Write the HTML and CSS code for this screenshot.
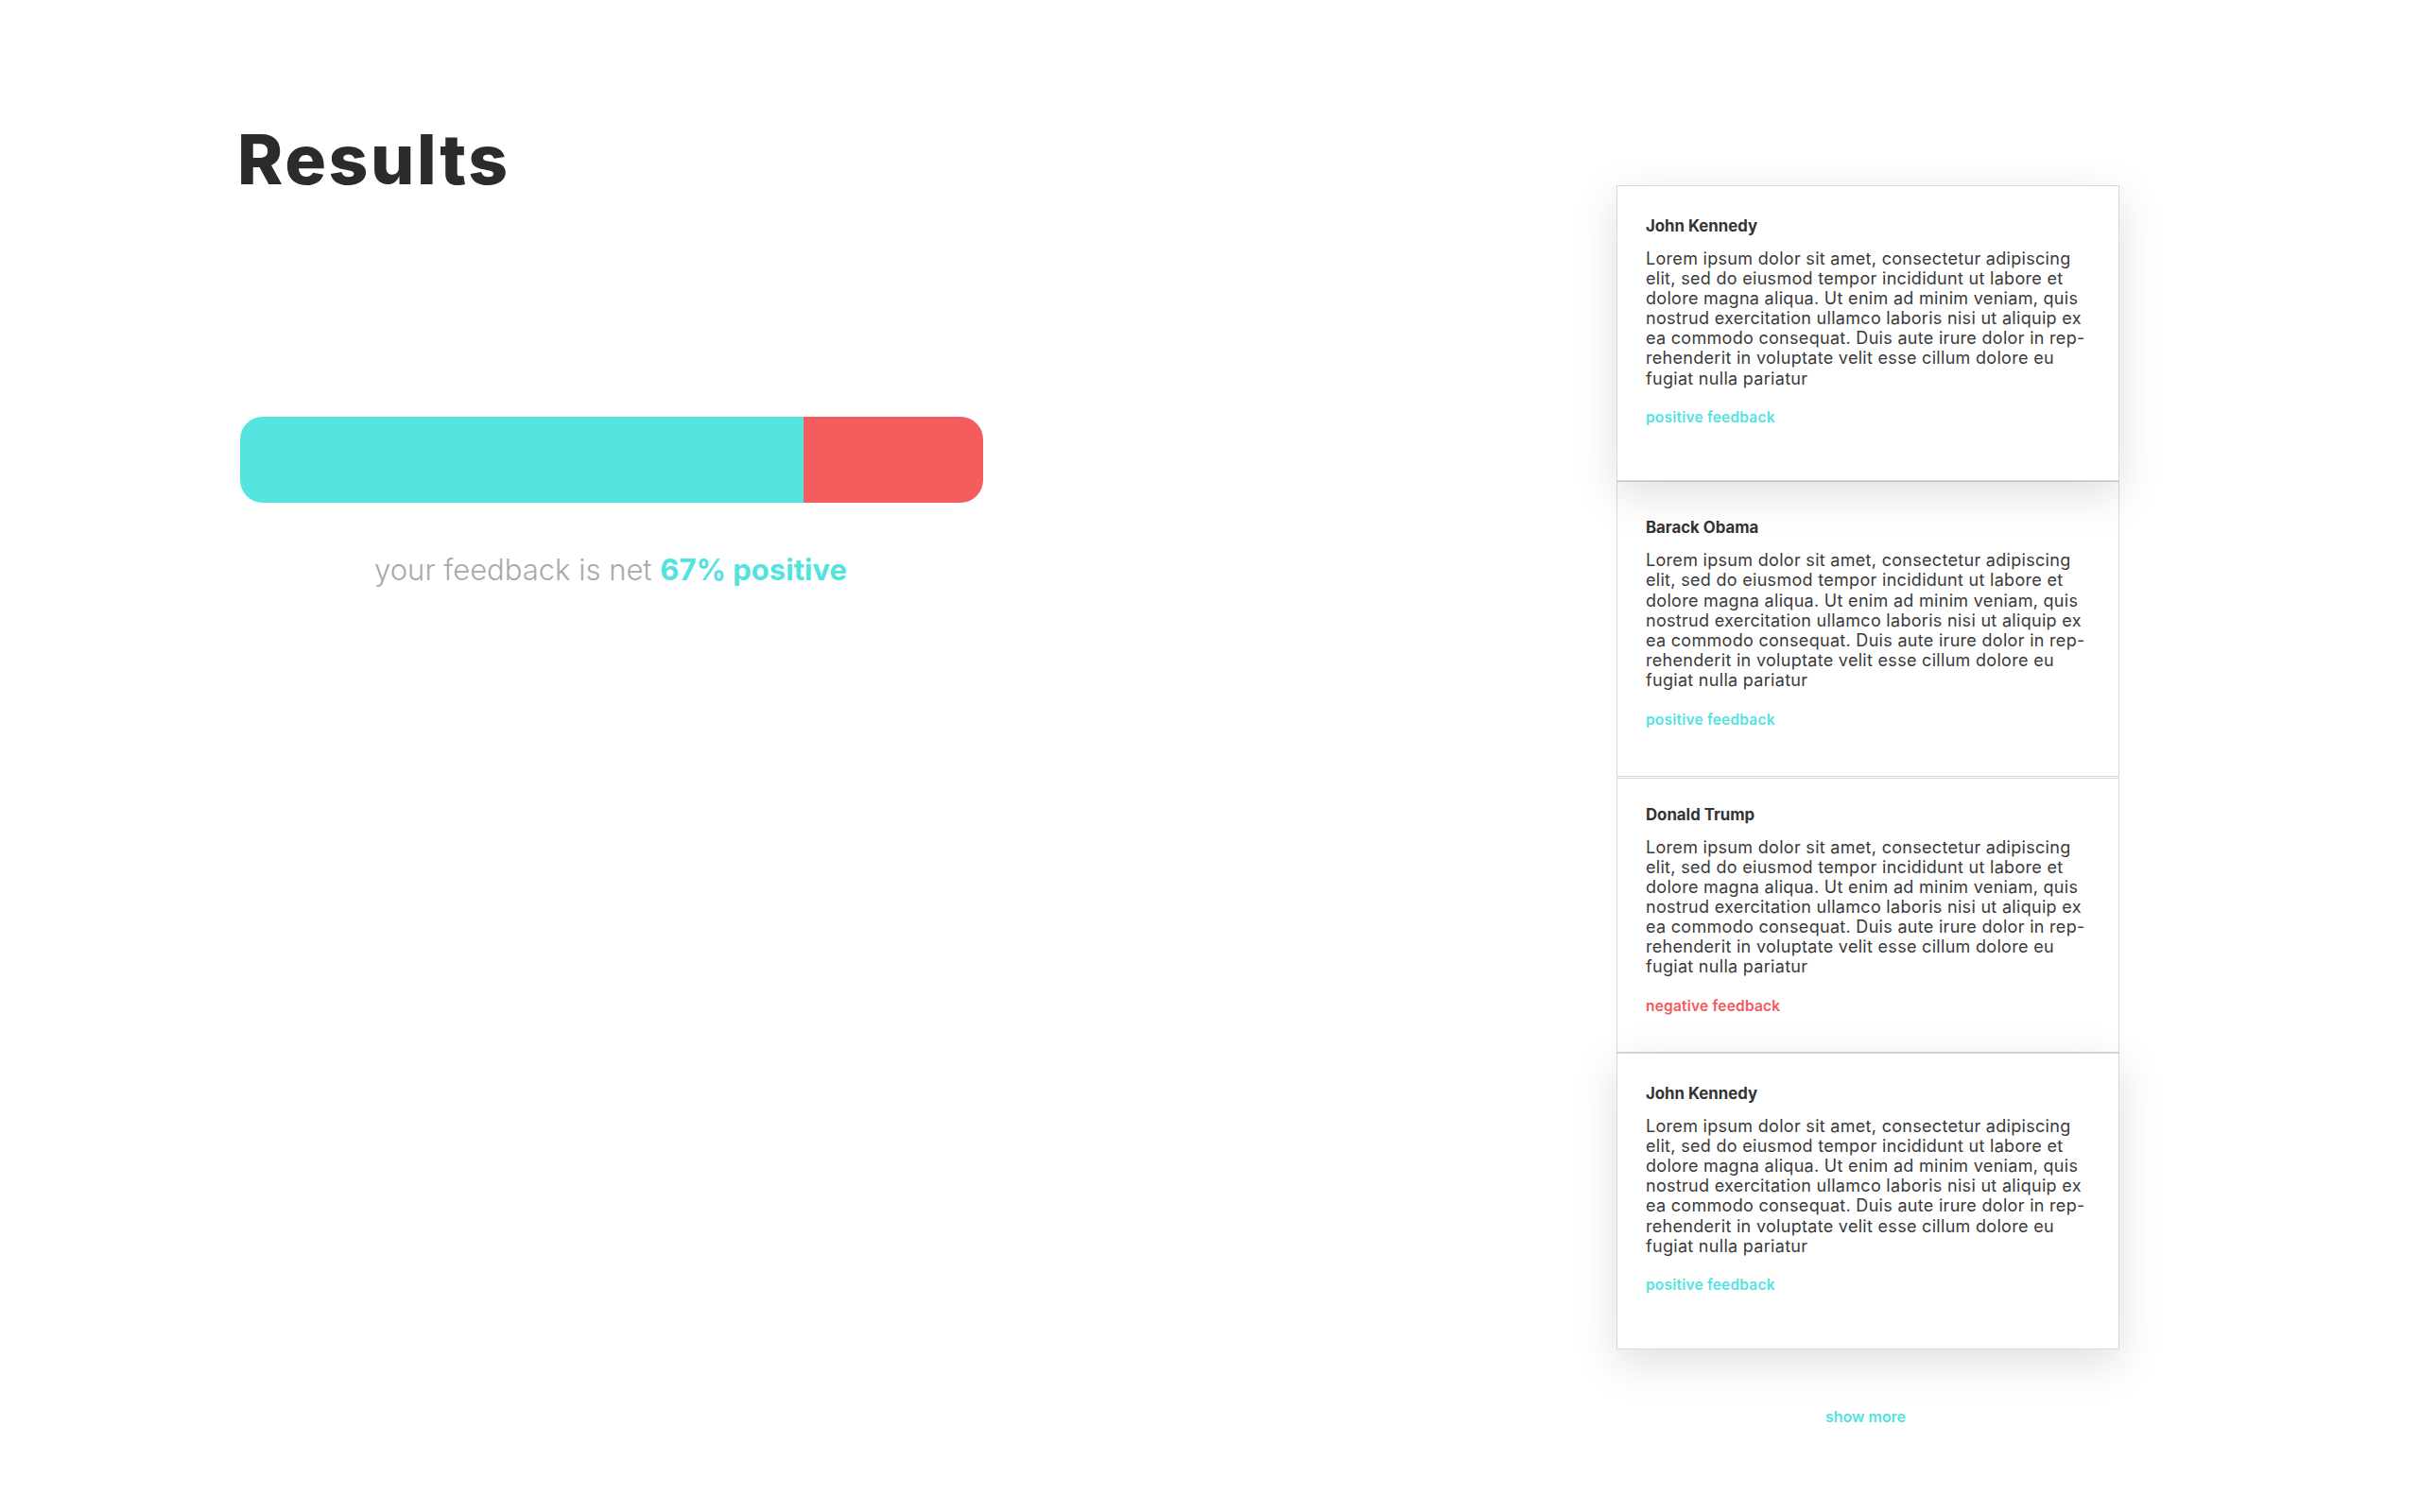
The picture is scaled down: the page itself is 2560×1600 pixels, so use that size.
FILE: index.html
```html
<!DOCTYPE html>
<html lang="en">
<head>
<meta charset="utf-8">
<title>Results</title>
<link rel="stylesheet" href="styles.css">
</head>
<body>
<main class="page">
  <section class="summary">
    <h1 class="title">Results</h1>
    <div class="bar">
      <div class="bar-pos" style="width: 75.8%"></div>
      <div class="bar-neg"></div>
    </div>
    <p class="net">your feedback is net <strong>67% positive</strong></p>
  </section>

  <aside class="feed">
    <article class="card card--raised card--first">
      <h2 class="card-name">John Kennedy</h2>
      <p class="card-text">Lorem ipsum dolor sit amet, consectetur adipiscing<br>elit, sed do eiusmod tempor incididunt ut labore et<br>dolore magna aliqua. Ut enim ad minim veniam, quis<br>nostrud exercitation ullamco laboris nisi ut aliquip ex<br>ea commodo consequat. Duis aute irure dolor in rep-<br>rehenderit in voluptate velit esse cillum dolore eu<br>fugiat nulla pariatur</p>
      <p class="card-tag card-tag--pos">positive feedback</p>
    </article>
    <article class="card card--second">
      <h2 class="card-name">Barack Obama</h2>
      <p class="card-text">Lorem ipsum dolor sit amet, consectetur adipiscing<br>elit, sed do eiusmod tempor incididunt ut labore et<br>dolore magna aliqua. Ut enim ad minim veniam, quis<br>nostrud exercitation ullamco laboris nisi ut aliquip ex<br>ea commodo consequat. Duis aute irure dolor in rep-<br>rehenderit in voluptate velit esse cillum dolore eu<br>fugiat nulla pariatur</p>
      <p class="card-tag card-tag--pos">positive feedback</p>
    </article>
    <article class="card card--third">
      <h2 class="card-name">Donald Trump</h2>
      <p class="card-text">Lorem ipsum dolor sit amet, consectetur adipiscing<br>elit, sed do eiusmod tempor incididunt ut labore et<br>dolore magna aliqua. Ut enim ad minim veniam, quis<br>nostrud exercitation ullamco laboris nisi ut aliquip ex<br>ea commodo consequat. Duis aute irure dolor in rep-<br>rehenderit in voluptate velit esse cillum dolore eu<br>fugiat nulla pariatur</p>
      <p class="card-tag card-tag--neg">negative feedback</p>
    </article>
    <article class="card card--raised card--fourth">
      <h2 class="card-name">John Kennedy</h2>
      <p class="card-text">Lorem ipsum dolor sit amet, consectetur adipiscing<br>elit, sed do eiusmod tempor incididunt ut labore et<br>dolore magna aliqua. Ut enim ad minim veniam, quis<br>nostrud exercitation ullamco laboris nisi ut aliquip ex<br>ea commodo consequat. Duis aute irure dolor in rep-<br>rehenderit in voluptate velit esse cillum dolore eu<br>fugiat nulla pariatur</p>
      <p class="card-tag card-tag--pos">positive feedback</p>
    </article>
    <a class="more" href="#">show more</a>
  </aside>
</main>
</body>
</html>
```

FILE: styles.css
```css
html, body {
  margin: 0;
  padding: 0;
  background: #ffffff;
}

body {
  font-family: Inter, "Noto Sans", "Liberation Sans", sans-serif;
  color: #333333;
}

.page {
  display: flex;
  justify-content: space-between;
  align-items: flex-start;
  padding: 0 318px 0 251px;
  min-height: 1600px;
  box-sizing: border-box;
}

/* Left summary */
.summary {
  width: 789px;
  padding-top: 132px;
}

.title {
  margin: 0;
  font-size: 73px;
  line-height: 73px;
  font-weight: 800;
  color: #2a2c2c;
  letter-spacing: 2.6px;
}

.bar {
  margin: 236px 0 0 3px;
  height: 91px;
  display: flex;
  border-radius: 24px;
  overflow: hidden;
}

.bar-pos {
  background: #54e5e0;
}

.bar-neg {
  flex: 1;
  background: #f55c5d;
}

.net {
  margin: 54px 0 0 1px;
  text-align: center;
  font-size: 31px;
  line-height: 34px;
  font-weight: 300;
  color: #a9a9a9;
}

.net strong {
  font-weight: 700;
  color: #52e3df;
}

/* Right feed */
.feed {
  width: 532px;
  padding-top: 196px;
  display: flex;
  flex-direction: column;
}

.card {
  position: relative;
  background: #ffffff;
  border: 1px solid #d7d7d7;
  padding: 32px 30px 57px;
}

.card--raised {
  z-index: 1;
  box-shadow: 0 14px 44px rgba(0, 0, 0, 0.13);
}

.card--second {
  padding-top: 38px;
  padding-bottom: 50px;
}

.card--third {
  margin-top: 1px;
  padding-top: 28px;
  padding-bottom: 39px;
}

.card--fourth {
  padding-top: 32px;
  padding-bottom: 58px;
}

.card-name {
  margin: 0;
  font-size: 16.8px;
  line-height: 20px;
  font-weight: 700;
  color: #333333;
}

.card-text {
  margin: 14px 0 0;
  font-size: 18px;
  line-height: 21.1px;
  font-weight: 400;
  letter-spacing: 0.3px;
  color: #3a3a3a;
  white-space: nowrap;
}

.card-tag {
  margin: 22.7px 0 0;
  font-size: 15.5px;
  line-height: 18px;
  font-weight: 600;
  letter-spacing: 0.2px;
}

.card-tag--pos {
  color: #52e3df;
}

.card-tag--neg {
  color: #f5585a;
}

.more {
  display: block;
  margin: 62px 5px 0 0;
  text-align: center;
  font-size: 16px;
  line-height: 18px;
  font-weight: 600;
  color: #52e3df;
  text-decoration: none;
}
```
